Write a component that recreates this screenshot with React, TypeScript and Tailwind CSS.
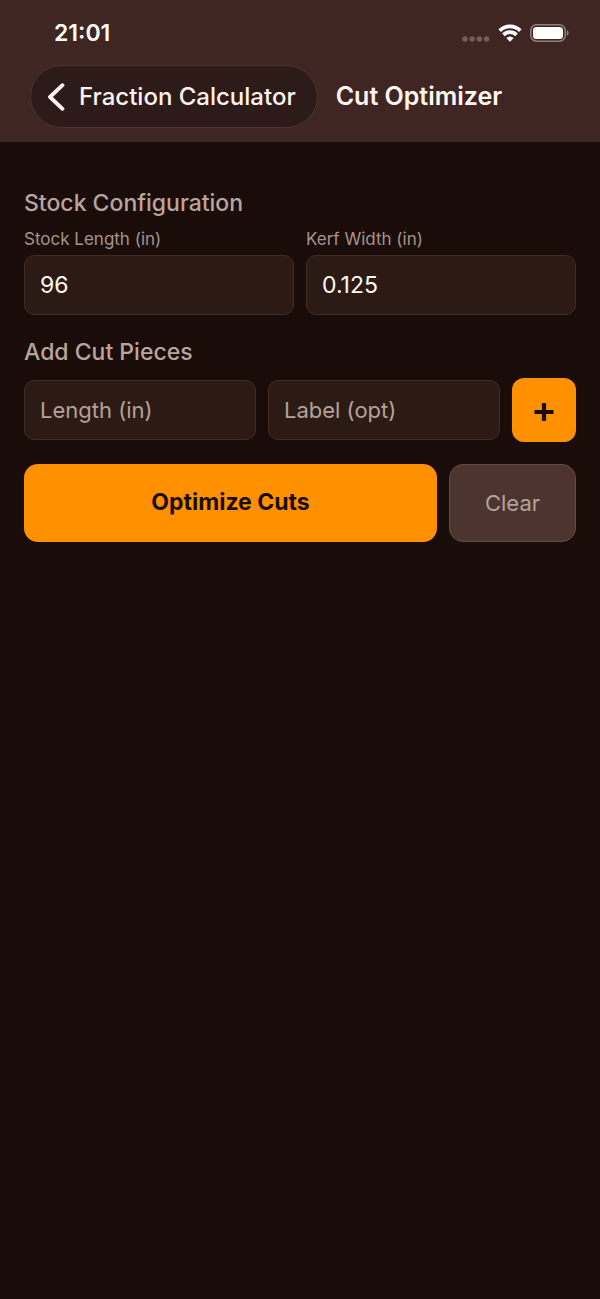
import { useState } from 'react';

interface FieldProps {
  id: string;
  label: string;
  value: string;
  onChange: (value: string) => void;
}

const inputClass =
  'h-[60px] w-full min-w-0 rounded-[10px] border border-[#3e2c25] bg-[#2c1b14] px-[15px] text-[23px] text-[#fff8f0] placeholder:text-[22px] placeholder:text-[#b5a199] outline-none focus:border-[#ff9100]';

const Field = ({ id, label, value, onChange }: FieldProps) => {
  return (
    <div className="flex flex-1 flex-col gap-1">
      <label htmlFor={id} className="text-[17px] leading-6 text-[#a6938c]">
        {label}
      </label>
      <input
        id={id}
        type="text"
        inputMode="decimal"
        value={value}
        onChange={(e) => onChange(e.target.value)}
        className={inputClass}
      />
    </div>
  );
};

const StatusBar = () => {
  return (
    <div className="flex h-8 items-center justify-between pl-[54px] pr-[31px]">
      <span className="text-[23px] font-semibold leading-8 text-white">21:01</span>
      <div className="flex items-center gap-2">
        <svg className="mt-3 h-[6px] w-7" viewBox="0 0 28 6" fill="#755c59">
          <circle cx="3" cy="3" r="2.7" />
          <circle cx="10.2" cy="3" r="2.7" />
          <circle cx="17.4" cy="3" r="2.7" />
          <circle cx="24.6" cy="3" r="2.7" />
        </svg>
        <svg className="h-[18px] w-6" viewBox="0 0 24 18" fill="none" stroke="#fff" strokeWidth="3.7">
          <path d="M1.7 6.6a14.6 14.6 0 0 1 20.6 0" />
          <path d="M5.5 10.9a9.2 9.2 0 0 1 13 0" />
          <path d="M12 17.8 8.3 14a5.3 5.3 0 0 1 7.4 0z" fill="#fff" stroke="none" />
        </svg>
        <svg className="h-[18px] w-[39px]" viewBox="0 0 39 18" fill="none">
          <rect x="0.8" y="0.8" width="34.4" height="16.4" rx="5.6" stroke="#937f7c" strokeWidth="1.5" />
          <rect x="3" y="3" width="30" height="12" rx="3.6" fill="#fff" />
          <path d="M36.8 6.2c1.1.5 1.8 1.6 1.8 2.8s-.7 2.3-1.8 2.8z" fill="#937f7c" />
        </svg>
      </div>
    </div>
  );
};

export default function App() {
  const [stockLength, setStockLength] = useState('96');
  const [kerfWidth, setKerfWidth] = useState('0.125');
  const [length, setLength] = useState('');
  const [label, setLabel] = useState('');

  const clear = () => {
    setLength('');
    setLabel('');
  };

  return (
    <div className="min-h-screen bg-[#1a0d09] font-[Inter,sans-serif]">
      <header className="bg-[#402623] pb-[14px] pt-[17px]">
        <StatusBar />
        <div className="mt-4 flex items-center gap-[18px] px-[30px]">
          <button
            type="button"
            className="flex h-[63px] items-center gap-[14px] rounded-full border border-[#4d3430] bg-[#2d1b1a] pl-4 pr-[21px] text-2xl font-[450] text-[#fff3ef]"
          >
            <svg className="h-7 w-[18px]" viewBox="0 0 18 28" fill="none" stroke="currentColor" strokeWidth="3.8" strokeLinecap="round" strokeLinejoin="round">
              <path d="M15.5 2.2 3 14l12.5 11.8" />
            </svg>
            Fraction Calculator
          </button>
          <h1 className="text-[25px] font-semibold text-[#fff8f0]">Cut Optimizer</h1>
        </div>
      </header>

      <main className="px-6 pt-[45px]">
        <section>
          <h2 className="text-[23px] font-[550] leading-8 text-[#b8a59e]">Stock Configuration</h2>
          <div className="mt-2 flex gap-3">
            <Field id="stock-length" label="Stock Length (in)" value={stockLength} onChange={setStockLength} />
            <Field id="kerf-width" label="Kerf Width (in)" value={kerfWidth} onChange={setKerfWidth} />
          </div>
        </section>

        <section className="mt-[21px]">
          <h2 className="text-[23px] font-[550] leading-8 text-[#b8a59e]">Add Cut Pieces</h2>
          <div className="mt-[10px] flex items-center gap-3">
            <input
              type="text"
              aria-label="Length (in)"
              placeholder="Length (in)"
              value={length}
              onChange={(e) => setLength(e.target.value)}
              className={inputClass}
            />
            <input
              type="text"
              aria-label="Label (opt)"
              placeholder="Label (opt)"
              value={label}
              onChange={(e) => setLabel(e.target.value)}
              className={inputClass}
            />
            <button
              type="button"
              aria-label="Add piece"
              className="flex size-16 shrink-0 items-center justify-center rounded-[12px] bg-[#ff9100] pt-1"
            >
              <svg className="size-5" viewBox="0 0 20 20" fill="none" stroke="#1a0d09" strokeWidth="4.2">
                <path d="M10 1v18M.5 10h19" />
              </svg>
            </button>
          </div>
        </section>

        <div className="mt-[22px] flex gap-3">
          <button type="button" className="h-[78px] flex-1 rounded-[14px] bg-[#ff9100] pb-0.5 text-[23px] font-bold text-[#1a0d09]">
            Optimize Cuts
          </button>
          <button
            type="button"
            onClick={clear}
            className="h-[78px] w-[127px] rounded-[14px] border border-[#654b45] bg-[#4e342f] text-[22px] text-[#b5a199]"
          >
            Clear
          </button>
        </div>
      </main>
    </div>
  );
}
